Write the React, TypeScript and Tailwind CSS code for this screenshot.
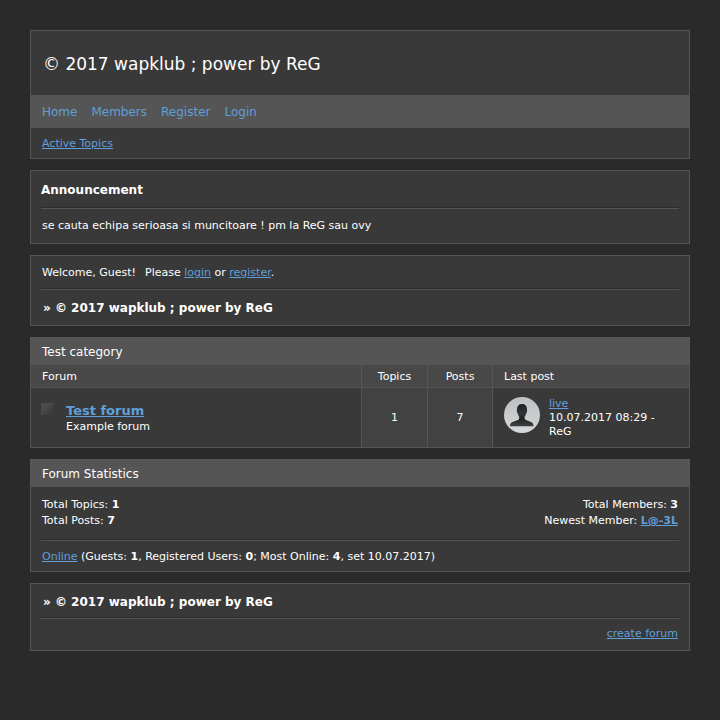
import type { ReactNode } from 'react';

const linkClass = 'text-[#609fd9] underline';

function Box({ children }: { children: ReactNode }) {
  return <section className="border border-[#555] bg-[#393939]">{children}</section>;
}

function BoxTitle({ children }: { children: ReactNode }) {
  return <h2 className="bg-[#555] px-[11px] pt-[5px] pb-1 text-xs leading-[18px]">{children}</h2>;
}

function Divider() {
  return <hr className="mx-2.5 h-0.5 border-t border-b border-t-[#2c2c2c] border-b-[#555]" />;
}

function Avatar() {
  return (
    <svg viewBox="0 0 36 36" className="h-9 w-9 shrink-0" aria-hidden="true">
      <defs>
        <linearGradient id="avatar-bg" x1="0" y1="0" x2="0" y2="1">
          <stop offset="0" stopColor="#bcc0c2" />
          <stop offset="1" stopColor="#d6d8d9" />
        </linearGradient>
        <linearGradient id="avatar-body" x1="0" y1="0" x2="0" y2="1">
          <stop offset="0" stopColor="#1d1f1f" />
          <stop offset="0.45" stopColor="#343737" />
          <stop offset="0.65" stopColor="#202222" />
          <stop offset="1" stopColor="#3e4242" />
        </linearGradient>
      </defs>
      <circle cx="18" cy="18" r="18" fill="url(#avatar-bg)" />
      <path
        fill="url(#avatar-body)"
        d="M18 7C14.800 7 13 9 13 12.200C12.800 13 12.700 13.500 13 14.500C13.200 15.500 13.500 16 13.900 17C14.200 18.300 14.800 19 15.200 19.700V21.500C14.500 23.300 11 24 8.500 25C6.600 25.800 6.100 27 6 29.200H29.500C29.400 27 29 25.800 27 25C24.500 24 21.300 23.300 20.600 21.500V19.700C21.200 19 21.700 18.200 22.100 17C22.500 16 22.800 15.500 23 14.500C23.200 13.500 23 13 23 12.200C23 9 21.300 7 18 7Z"
      />
    </svg>
  );
}

function ForumIcon() {
  return (
    <svg viewBox="0 0 12 12" className="mt-0.5 h-3 w-3 shrink-0" aria-hidden="true">
      <rect width="12" height="12" fill="#4b4b4b" />
      <path d="M2 12V9L9 2H12V12Z" fill="#444" />
      <path d="M5 12L12 4V12Z" fill="#3d3d3d" />
    </svg>
  );
}

export default function App() {
  const nav = ['Home', 'Members', 'Register', 'Login'];
  const siteName = '© 2017 wapklub ; power by ReG';

  return (
    <div className="min-h-screen bg-[#2a2a2a] p-[30px] font-['DejaVu_Sans',sans-serif] text-[11px] leading-4 text-white">
      <div className="flex flex-col gap-[11px]">
        <header className="border border-[#555] bg-[#393939]">
          <h1 className="px-3 pt-[21px] pb-[19px] text-[17px] leading-6">{siteName}</h1>
          <nav className="flex gap-3.5 bg-[#555] px-[11px] pt-[9px] pb-2 text-xs leading-4">
            {nav.map((item) => (
              <a key={item} href="#" className="text-[#609fd9]">{item}</a>
            ))}
          </nav>
          <div className="px-[11px] pt-2 pb-1.5">
            <a href="#" className={linkClass}>Active Topics</a>
          </div>
        </header>

        <Box>
          <h2 className="px-2.5 pt-[11px] pb-[9px] text-xs leading-4 font-bold">Announcement</h2>
          <Divider />
          <p className="px-[11px] pt-[9px] pb-[9px]">se cauta echipa serioasa si muncitoare ! pm la ReG sau ovy</p>
        </Box>

        <Box>
          <p className="px-[11px] pt-[9px] pb-[7px]">
            <span className="mr-[9px]">Welcome, Guest!</span>Please <a href="#" className={linkClass}>login</a> or <a href="#" className={linkClass}>register</a>.
          </p>
          <Divider />
          <p className="px-3 pt-2.5 pb-[9px] text-xs leading-4 font-bold">» {siteName}</p>
        </Box>

        <Box>
          <BoxTitle>Test category</BoxTitle>
          <table className="w-full table-fixed border-separate border-spacing-0">
            <colgroup>
              <col />
              <col className="w-[66px]" />
              <col className="w-[65px]" />
              <col className="w-[197px]" />
            </colgroup>
            <thead>
              <tr className="bg-[#484848]">
                <th className="border-b border-[#555] px-[11px] pt-1 pb-0.5 text-left font-normal">Forum</th>
                <th className="border-b border-l border-[#555] pt-1 pb-0.5 text-center font-normal">Topics</th>
                <th className="border-b border-l border-[#555] pt-1 pb-0.5 text-center font-normal">Posts</th>
                <th className="border-b border-l border-[#555] px-[11px] pt-1 pb-0.5 text-left font-normal">Last post</th>
              </tr>
            </thead>
            <tbody>
              <tr>
                <td className="px-2.5 py-[13px] align-top">
                  <div className="flex gap-[13px]">
                    <ForumIcon />
                    <div>
                      <h3 className="text-[13px] leading-5 font-bold">
                        <a href="#" className={linkClass}>Test forum</a>
                      </h3>
                      <p className="leading-3">Example forum</p>
                    </div>
                  </div>
                </td>
                <td className="border-l border-[#555] bg-[#424242] text-center">1</td>
                <td className="border-l border-[#555] bg-[#424242] text-center">7</td>
                <td className="border-l border-[#555] px-[11px] pt-[9px] pb-2 align-top">
                  <div className="flex gap-[9px]">
                    <Avatar />
                    <p className="leading-[14px]">
                      <a href="#" className={linkClass}>live</a>
                      <br />
                      10.07.2017 08:29 -
                      <br />
                      ReG
                    </p>
                  </div>
                </td>
              </tr>
            </tbody>
          </table>
        </Box>

        <Box>
          <BoxTitle>Forum Statistics</BoxTitle>
          <div className="flex justify-between px-[11px] py-2.5">
            <p>
              Total Topics: <b>1</b>
              <br />
              Total Posts: <b>7</b>
            </p>
            <p className="text-right">
              Total Members: <b>3</b>
              <br />
              Newest Member: <a href="#" className="font-bold text-[#609fd9] underline">L@-3L</a>
            </p>
          </div>
          <Divider />
          <p className="px-[11px] pt-2 pb-1.5">
            <a href="#" className={linkClass}>Online</a> (Guests: <b>1</b>, Registered Users: <b>0</b>; Most Online: <b>4</b>, set 10.07.2017)
          </p>
        </Box>

        <footer className="border border-[#555] bg-[#393939]">
          <p className="px-3 pt-2.5 pb-[7px] text-xs leading-4 font-bold">» {siteName}</p>
          <Divider />
          <p className="px-[11px] pt-[7px] pb-2 text-right">
            <a href="#" className={linkClass}>create forum</a>
          </p>
        </footer>
      </div>
    </div>
  );
}
